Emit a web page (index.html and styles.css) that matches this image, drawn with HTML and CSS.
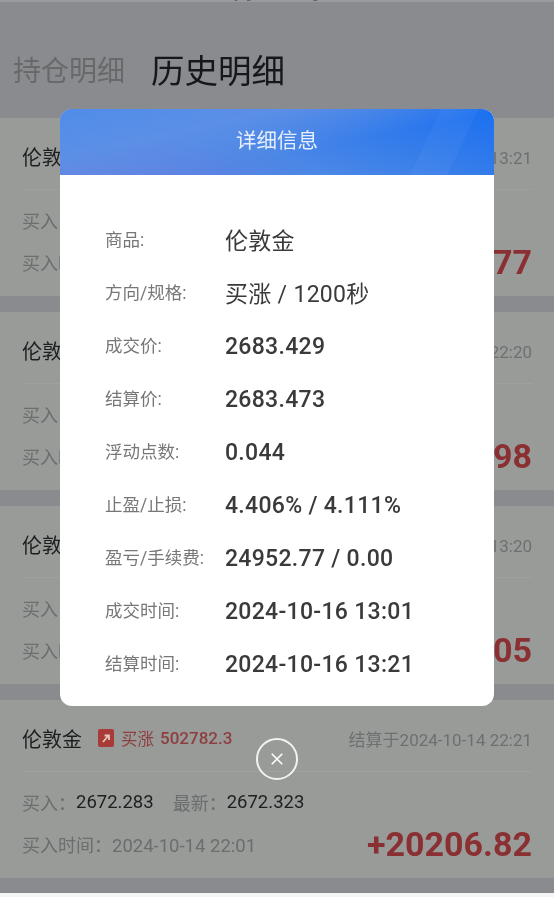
FILE: index.html
```html
<!DOCTYPE html>
<html lang="zh">
<head>
<meta charset="utf-8">
<title>历史明细</title>
<link rel="stylesheet" href="styles.css">
</head>
<body>
<div class="page">
  <header class="topbar"><span class="topbar-title">持仓查询</span></header>
  <nav class="tabs">
    <span class="tab">持仓明细</span>
    <span class="tab tab-active">历史明细</span>
  </nav>
  <main class="list">
    <article class="card">
      <div class="card-head">
        <span class="name">伦敦金</span>
        <span class="tag"><svg class="tag-icon" viewBox="0 0 16 18"><rect width="16" height="18" rx="2" fill="#a83a38"/><path d="M5 13l5-6M6.500 6.500h4.500v4.500" stroke="#e8c8b8" stroke-width="1.800" fill="none"/></svg>买涨 <b>502782.3</b></span>
        <span class="settled">结算于2024-10-16 13:21</span>
      </div>
      <div class="line"></div>
      <div class="row"><span class="muted">买入：</span><span class="num">2683.429</span><span class="muted gap">最新：</span><span class="num">2683.473</span></div>
      <div class="row row-last"><span class="muted">买入时间：<span class="time">2024-10-16 13:01</span></span><span class="profit">+24952.77</span></div>
    </article>
    <article class="card">
      <div class="card-head">
        <span class="name">伦敦金</span>
        <span class="tag"><svg class="tag-icon" viewBox="0 0 16 18"><rect width="16" height="18" rx="2" fill="#a83a38"/><path d="M5 13l5-6M6.500 6.500h4.500v4.500" stroke="#e8c8b8" stroke-width="1.800" fill="none"/></svg>买涨 <b>502782.3</b></span>
        <span class="settled">结算于2024-10-14 22:20</span>
      </div>
      <div class="line"></div>
      <div class="row"><span class="muted">买入：</span><span class="num">2672.283</span><span class="muted gap">最新：</span><span class="num">2672.323</span></div>
      <div class="row row-last"><span class="muted">买入时间：<span class="time">2024-10-14 22:00</span></span><span class="profit">+20206.98</span></div>
    </article>
    <article class="card">
      <div class="card-head">
        <span class="name">伦敦金</span>
        <span class="tag"><svg class="tag-icon" viewBox="0 0 16 18"><rect width="16" height="18" rx="2" fill="#a83a38"/><path d="M5 13l5-6M6.500 6.500h4.500v4.500" stroke="#e8c8b8" stroke-width="1.800" fill="none"/></svg>买涨 <b>502782.3</b></span>
        <span class="settled">结算于2024-10-15 13:20</span>
      </div>
      <div class="line"></div>
      <div class="row"><span class="muted">买入：</span><span class="num">2672.283</span><span class="muted gap">最新：</span><span class="num">2672.323</span></div>
      <div class="row row-last"><span class="muted">买入时间：<span class="time">2024-10-15 13:00</span></span><span class="profit">+20206.05</span></div>
    </article>
    <article class="card">
      <div class="card-head">
        <span class="name">伦敦金</span>
        <span class="tag"><svg class="tag-icon" viewBox="0 0 16 18"><rect width="16" height="18" rx="2" fill="#a83a38"/><path d="M5 13l5-6M6.500 6.500h4.500v4.500" stroke="#e8c8b8" stroke-width="1.800" fill="none"/></svg>买涨 <b>502782.3</b></span>
        <span class="settled">结算于2024-10-14 22:21</span>
      </div>
      <div class="line"></div>
      <div class="row"><span class="muted">买入：</span><span class="num">2672.283</span><span class="muted gap">最新：</span><span class="num">2672.323</span></div>
      <div class="row row-last"><span class="muted">买入时间：<span class="time">2024-10-14 22:01</span></span><span class="profit">+20206.82</span></div>
    </article>
  </main>
</div>

<div class="overlay">
  <section class="modal">
    <h2 class="modal-head"><span class="modal-title">详细信息</span></h2>
    <dl class="details">
      <div class="detail"><dt>商品:</dt><dd class="cjk">伦敦金</dd></div>
      <div class="detail"><dt>方向/规格:</dt><dd class="cjk">买涨 / 1200秒</dd></div>
      <div class="detail"><dt>成交价:</dt><dd>2683.429</dd></div>
      <div class="detail"><dt>结算价:</dt><dd>2683.473</dd></div>
      <div class="detail"><dt>浮动点数:</dt><dd>0.044</dd></div>
      <div class="detail"><dt>止盈/止损:</dt><dd>4.406% / 4.111%</dd></div>
      <div class="detail"><dt>盈亏/手续费:</dt><dd>24952.77 / 0.00</dd></div>
      <div class="detail"><dt>成交时间:</dt><dd>2024-10-16 13:01</dd></div>
      <div class="detail"><dt>结算时间:</dt><dd>2024-10-16 13:21</dd></div>
    </dl>
  </section>
  <button class="close" aria-label="关闭"><svg viewBox="0 0 16 16" class="close-icon"><path d="M2 2l12 12M14 2L2 14" stroke="#fff" stroke-width="1.800" fill="none"/></svg></button>
</div>
</body>
</html>
```
FILE: styles.css
```css
* { box-sizing: border-box; }
html, body { margin: 0; padding: 0; }
body {
  width: 554px;
  height: 897px;
  overflow: hidden;
  position: relative;
  font-family: Roboto, "Noto Sans CJK SC", sans-serif;
  background: #f4f4f4;
}
.page {
  height: 893px;
  overflow: hidden;
  background: #8a8b8e;
  filter: blur(0.6px);
}
.topbar {
  height: 2px;
  overflow: hidden;
  background: #9a9b9c;
  display: flex;
  justify-content: center;
}
.topbar-title {
  font-size: 22px;
  line-height: 24px;
  margin-top: -21px;
  color: #333;
  flex: none;
}
.tabs {
  height: 116px;
  padding: 48px 0 0 13px;
  display: flex;
  align-items: flex-start;
  gap: 26px;
}
.tab {
  font-size: 28px;
  line-height: 44px;
  color: #68696b;
}
.tab-active {
  font-size: 33.500px;
  color: #16171a;
}
.list { display: flex; flex-direction: column; gap: 16px; }
.card {
  height: 178px;
  background: #999b99;
  padding: 20px 22px 0;
}
.card-head {
  display: flex;
  align-items: center;
  height: 36px;
}
.name { font-size: 20px; color: #1c1d1e; }
.tag {
  display: flex;
  align-items: center;
  margin-left: 16px;
  font-size: 16.500px;
  color: #8d3f40;
  gap: 4px;
}
.tag b { font-size: 17px; font-weight: 500; margin-left: 2px; }
.tag-icon { width: 16px; height: 18px; margin-right: 3px; }
.settled { margin-left: auto; font-size: 17px; color: #6e6f71; }
.line { height: 1px; margin-top: 15px; background: #9fa1a0; }
.row {
  display: flex;
  align-items: center;
  margin-top: 18px;
  height: 24px;
  font-size: 18px;
}
.muted { color: #6c6d6e; }
.num { font-size: 18.500px; color: #1e1f20; }
.gap { margin-left: 19px; }
.time { font-size: 18.500px; }
.row-last {
  justify-content: space-between;
  margin-top: 18px;
}
.profit { font-size: 34px; font-weight: 700; color: #8a3032; }
.overlay {
  position: absolute;
  inset: 0;
}
.modal {
  position: absolute;
  left: 60px;
  top: 109px;
  width: 434px;
  height: 597px;
  border-radius: 12px;
  overflow: hidden;
  background: #fff;
}
.modal-head {
  margin: 0;
  height: 66px;
  display: flex;
  align-items: center;
  justify-content: center;
  font-size: 20.500px;
  font-weight: 400;
  color: #e6eefb;
  background:
    linear-gradient(115deg, transparent 82%, rgba(255,255,255,.035) 82%, rgba(255,255,255,.035) 90%, transparent 90%),
    linear-gradient(168deg, #4f8de9 0%, #5c8fe6 30%, transparent 60%),
    linear-gradient(20deg, #6d80de 0%, #4a87e6 45%, #1a6ff0 100%);
}
.modal-title { padding-bottom: 6px; filter: blur(0.3px); }
.details { margin: 0; padding: 39px 0 0 45px; filter: blur(0.35px); }
.detail { display: flex; align-items: center; height: 53px; }
dt {
  width: 120px;
  padding-bottom: 4px;
  font-size: 17.500px;
  color: #777;
  flex: none;
  white-space: nowrap;
}
dd {
  margin: 0;
  font-size: 23px;
  letter-spacing: .3px;
  font-weight: 500;
  color: #3a3a3c;
  white-space: nowrap;
}
.cjk { font-size: 23px; font-weight: 400; padding-bottom: 4px; }
.close {
  position: absolute;
  left: 256px;
  top: 738px;
  width: 42px;
  height: 42px;
  padding: 0;
  border: 2px solid #f2f2f2;
  border-radius: 50%;
  background: transparent;
  display: flex;
  align-items: center;
  justify-content: center;
}
.close-icon { width: 14px; height: 14px; }
```
